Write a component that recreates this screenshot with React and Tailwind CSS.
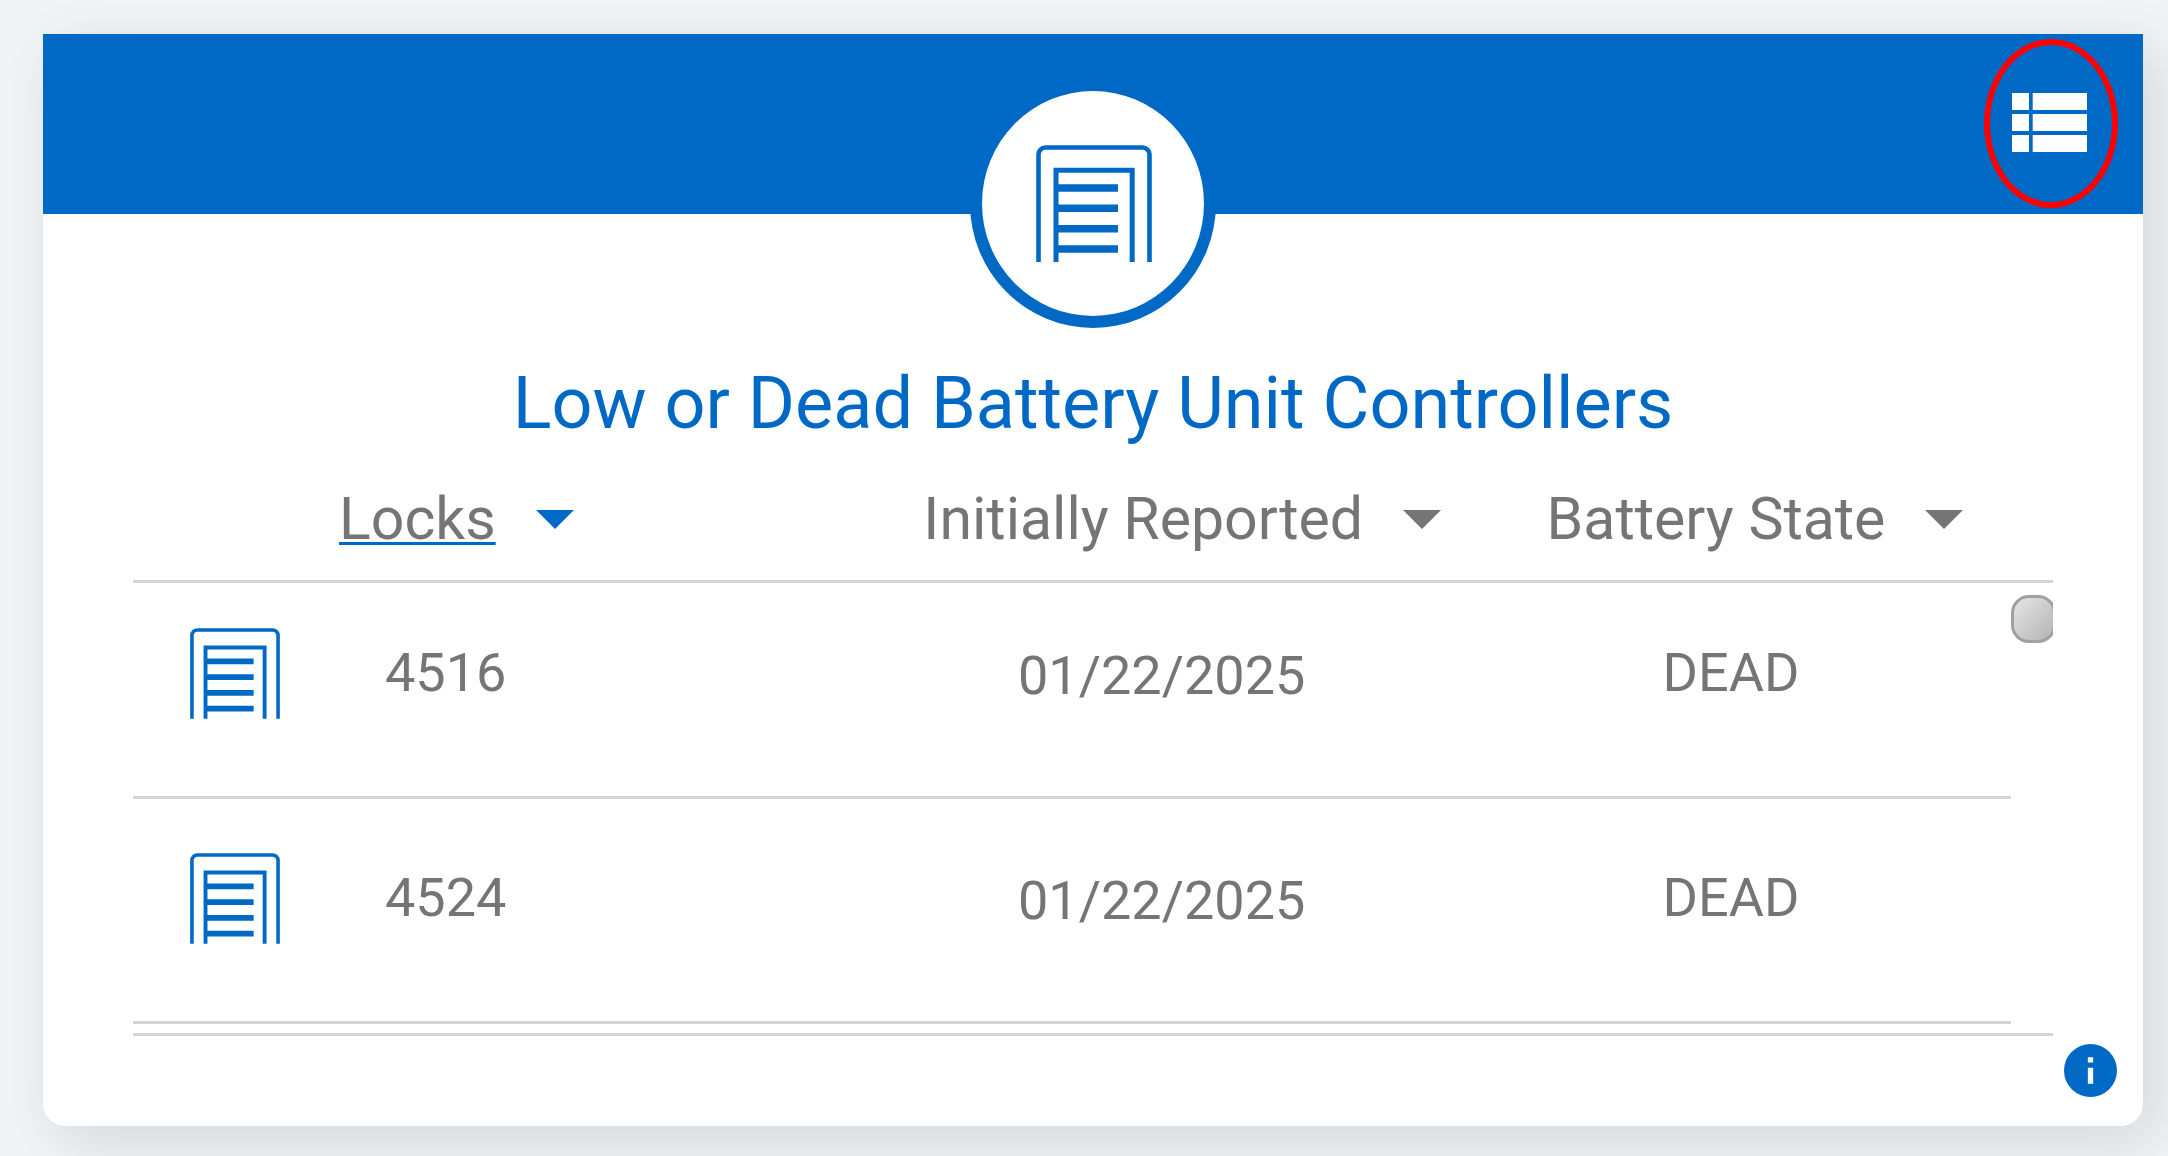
import React from 'react';

const locks = [
  { id: '4516', reported: '01/22/2025', state: 'DEAD' },
  { id: '4524', reported: '01/22/2025', state: 'DEAD' },
];

function DoorIcon({ className }) {
  return (
    <svg viewBox="0 0 116 117" className={className} fill="none" stroke="#0069c5" aria-hidden="true">
      <path d="M2.5 117V9.5a7 7 0 0 1 7-7h97a7 7 0 0 1 7 7V117" strokeWidth="4.6" />
      <path d="M20 117V25.2h76.2V117" strokeWidth="5" />
      <path d="M21 43h61M21 63.3h61M21 83.7h61M21 104h61" strokeWidth="7.4" />
    </svg>
  );
}

function ListIcon() {
  return (
    <svg viewBox="0 0 75 59" className="w-[75px]" fill="#fff" aria-hidden="true">
      <path d="M0 0h17v17H0zM20.7 0H75v17H20.7zM0 21h17v17H0zM20.7 21H75v17H20.7zM0 42h17v17H0zM20.7 42H75v17H20.7z" />
    </svg>
  );
}

function SortButton({ label, active }) {
  return (
    <button type="button" className="inline-flex items-center gap-10 text-[59px] leading-[70px]">
      {active ? (
        <span className="underline decoration-[#0069c5] decoration-[3px] underline-offset-[3px] [text-decoration-skip-ink:none]">{label}</span>
      ) : (
        <span>{label}</span>
      )}
      <svg viewBox="0 0 38 19" className="w-[38px]" fill={active ? '#0069c5' : '#757575'} aria-hidden="true">
        <path d="M0 0h38L19 19z" />
      </svg>
    </button>
  );
}

export default function App() {
  return (
    <main className="min-h-screen bg-[#f0f4f6] pt-[34px] pr-[25px] pb-[30px] pl-[43px] text-[#757575] [font-family:Roboto,sans-serif]">
      <section className="relative rounded-b-[22px] bg-white pb-[90px] shadow-[14px_16px_60px_rgba(0,20,30,0.12)]">
        <header className="flex h-[180px] items-start justify-end bg-[#0069c5] pt-[5px] pr-[25px]">
          <button
            type="button"
            aria-label="List view"
            className="flex h-[169px] w-[134px] items-center justify-center rounded-[50%] border-[6px] border-[#ff0000] pr-[3px] pb-[2px]"
          >
            <ListIcon />
          </button>
        </header>

        <div className="mx-auto -mt-[135px] flex h-[249px] w-[246px] items-center justify-center rounded-[50%] border-[12px] border-[#0069c5] bg-white pl-[2px]">
          <DoorIcon className="w-[116px]" />
        </div>

        <h1 className="mt-[34px] text-center text-[72px] leading-[84px] text-[#0069c5]">
          Low or Dead Battery Unit Controllers
        </h1>

        <div className="mx-[90px] border-b-[3px] border-[#d1d6da] pb-[9px]">
          <table className="w-full table-fixed border-separate border-spacing-0">
            <colgroup>
              <col className="w-[206px]" />
              <col />
              <col className="w-[33%]" />
              <col className="w-[512px]" />
              <col className="w-[42px]" />
            </colgroup>
            <thead>
              <tr className="h-[137px] [&>*]:border-b-[3px] [&>*]:border-[#d1d6da] [&>*]:p-0 [&>*]:pt-[12px] [&>*]:font-normal">
                <td />
                <th scope="col" className="text-left"><SortButton label="Locks" active /></th>
                <th scope="col"><SortButton label="Initially Reported" /></th>
                <th scope="col"><SortButton label="Battery State" /></th>
                <td />
              </tr>
            </thead>
            <tbody className="text-[54px] leading-[64px]">
              {locks.map((lock, i) => (
                <tr
                  key={lock.id}
                  className={i === 0 ? 'h-[216px] align-top [&>td]:pt-[45px]' : 'h-[225px] align-top [&>td]:pt-[54px]'}
                >
                  <td className="border-b-[3px] border-[#d1d6da] pl-[57px]"><DoorIcon className="w-[90px]" /></td>
                  <td className="border-b-[3px] border-[#d1d6da] pl-[46px]"><div className="pt-[13px]">{lock.id}</div></td>
                  <td className="border-b-[3px] border-[#d1d6da] pr-[41px] text-center"><div className="pt-4">{lock.reported}</div></td>
                  <td className="border-b-[3px] border-[#d1d6da] pr-[48px] text-center"><div className="pt-[13px]">{lock.state}</div></td>
                  {i === 0 && (
                    <td rowSpan={2} className="overflow-hidden pt-3!">
                      <div className="h-12 w-[45px] rounded-[18px] border-[3px] border-[#a0a0a0] bg-linear-to-br from-[#e6e6e6] to-[#b4b4b4]" />
                    </td>
                  )}
                </tr>
              ))}
            </tbody>
          </table>
        </div>

        <button type="button" aria-label="Information" className="absolute right-[26px] bottom-[29px]">
          <svg viewBox="2 2 20 20" className="w-[53px]" aria-hidden="true">
            <circle cx="12" cy="12" r="10" fill="#0069c5" />
            <path d="M11 7h2v2h-2zM11 11h2v6h-2z" fill="#fff" />
          </svg>
        </button>
      </section>
    </main>
  );
}
